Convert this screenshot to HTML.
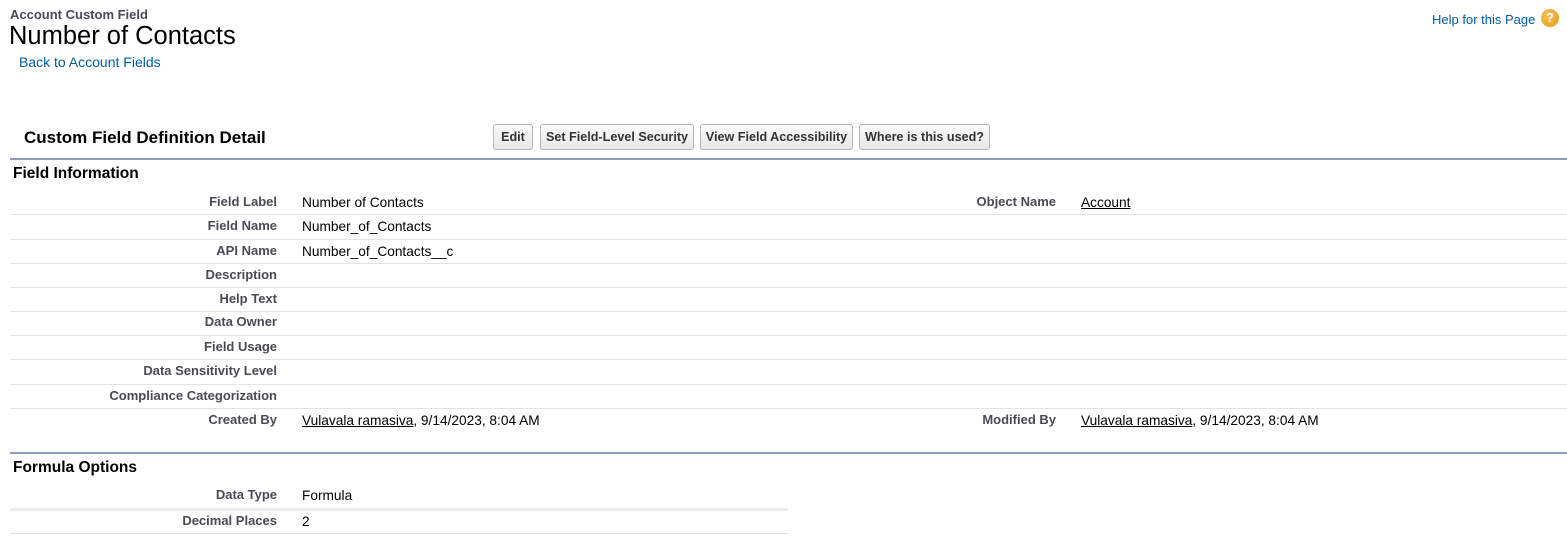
<!DOCTYPE html>
<html><head><meta charset="utf-8"><style>
body{margin:0;width:1567px;height:536px;background:#fff;font-family:"Liberation Sans",Arial,sans-serif;position:relative;overflow:hidden}
.a{position:absolute;white-space:nowrap;line-height:16px}
.l{position:absolute;right:1290px;font-size:13px;font-weight:bold;color:#4a4a56;line-height:16px;white-space:nowrap}
.v{position:absolute;left:302px;font-size:13.7px;color:#000;line-height:16px;white-space:nowrap}
.hr{position:absolute;left:10px;height:1px;background:#e3e3e3}
.btn{position:absolute;top:124px;height:26px;border:1px solid #b5b5b5;border-radius:3px;background:linear-gradient(#fafafa,#e8e8e8);font-size:12.6px;font-weight:bold;color:#333;line-height:25px;text-align:center;box-sizing:border-box}
u{text-decoration:underline}
</style></head><body>
<div class="a" style="left:10px;top:7px;font-size:13px;font-weight:bold;color:#4a4a56">Account Custom Field</div>
<div class="a" style="left:9px;top:22px;font-size:25.5px;line-height:29px;color:#000">Number of Contacts</div>
<div class="a" style="left:19px;top:54px;font-size:14px;color:#015ba7">Back to Account Fields</div>
<div class="a" style="left:1432px;top:12px;font-size:13px;color:#015ba7">Help for this Page</div>
<div style="position:absolute;left:1541px;top:9px;width:18px;height:18px;border-radius:50%;background:radial-gradient(circle at 40% 35%,#f7c25a,#e59a12);color:#fff;font:bold 13px/18px 'Liberation Sans',sans-serif;text-align:center">?</div>

<div class="a" style="left:24px;top:128px;font-size:17px;line-height:19px;font-weight:bold;color:#000">Custom Field Definition Detail</div>
<div class="btn" style="left:493px;width:40px">Edit</div>
<div class="btn" style="left:540px;width:154px">Set Field-Level Security</div>
<div class="btn" style="left:700px;width:153px">View Field Accessibility</div>
<div class="btn" style="left:859px;width:131px">Where is this used?</div>
<div style="position:absolute;left:10px;top:158px;width:1557px;height:2px;background:#8e9dbe"></div>
<div class="a" style="left:13px;top:165px;font-size:15.5px;line-height:17px;font-weight:bold;color:#000">Field Information</div>

<div class="l" style="top:194px">Field Label</div><div class="v" style="top:195px">Number of Contacts</div>
<div class="l" style="top:194px;right:511px">Object Name</div><div class="v" style="top:195px;left:1081px"><u>Account</u></div>
<div class="l" style="top:218px">Field Name</div><div class="v" style="top:219px">Number_of_Contacts</div>
<div class="l" style="top:243px">API Name</div><div class="v" style="top:244px">Number_of_Contacts__c</div>
<div class="l" style="top:267px">Description</div>
<div class="l" style="top:291px">Help Text</div>
<div class="l" style="top:314px">Data Owner</div>
<div class="l" style="top:339px">Field Usage</div>
<div class="l" style="top:363px">Data Sensitivity Level</div>
<div class="l" style="top:388px">Compliance Categorization</div>
<div class="l" style="top:412px">Created By</div><div class="v" style="top:413px"><u>Vulavala ramasiva</u>, 9/14/2023, 8:04 AM</div>
<div class="l" style="top:412px;right:511px">Modified By</div><div class="v" style="top:413px;left:1081px"><u>Vulavala ramasiva</u>, 9/14/2023, 8:04 AM</div>

<div class="hr" style="top:214px;width:1557px"></div>
<div class="hr" style="top:239px;width:1557px"></div>
<div class="hr" style="top:263px;width:1557px"></div>
<div class="hr" style="top:287px;width:1557px"></div>
<div class="hr" style="top:311px;width:1557px"></div>
<div class="hr" style="top:335px;width:1557px"></div>
<div class="hr" style="top:359px;width:1557px"></div>
<div class="hr" style="top:384px;width:1557px"></div>
<div class="hr" style="top:408px;width:1557px"></div>

<div style="position:absolute;left:10px;top:452px;width:1557px;height:2px;background:#8e9dbe"></div>
<div class="a" style="left:13px;top:459px;font-size:15.5px;line-height:17px;font-weight:bold;color:#000">Formula Options</div>
<div class="l" style="top:487px">Data Type</div><div class="v" style="top:488px">Formula</div>
<div class="hr" style="top:508px;width:778px;height:3px;background:#ececec"></div>
<div class="l" style="top:513px">Decimal Places</div><div class="v" style="top:514px">2</div>
<div class="hr" style="top:533px;width:778px"></div>
</body></html>
